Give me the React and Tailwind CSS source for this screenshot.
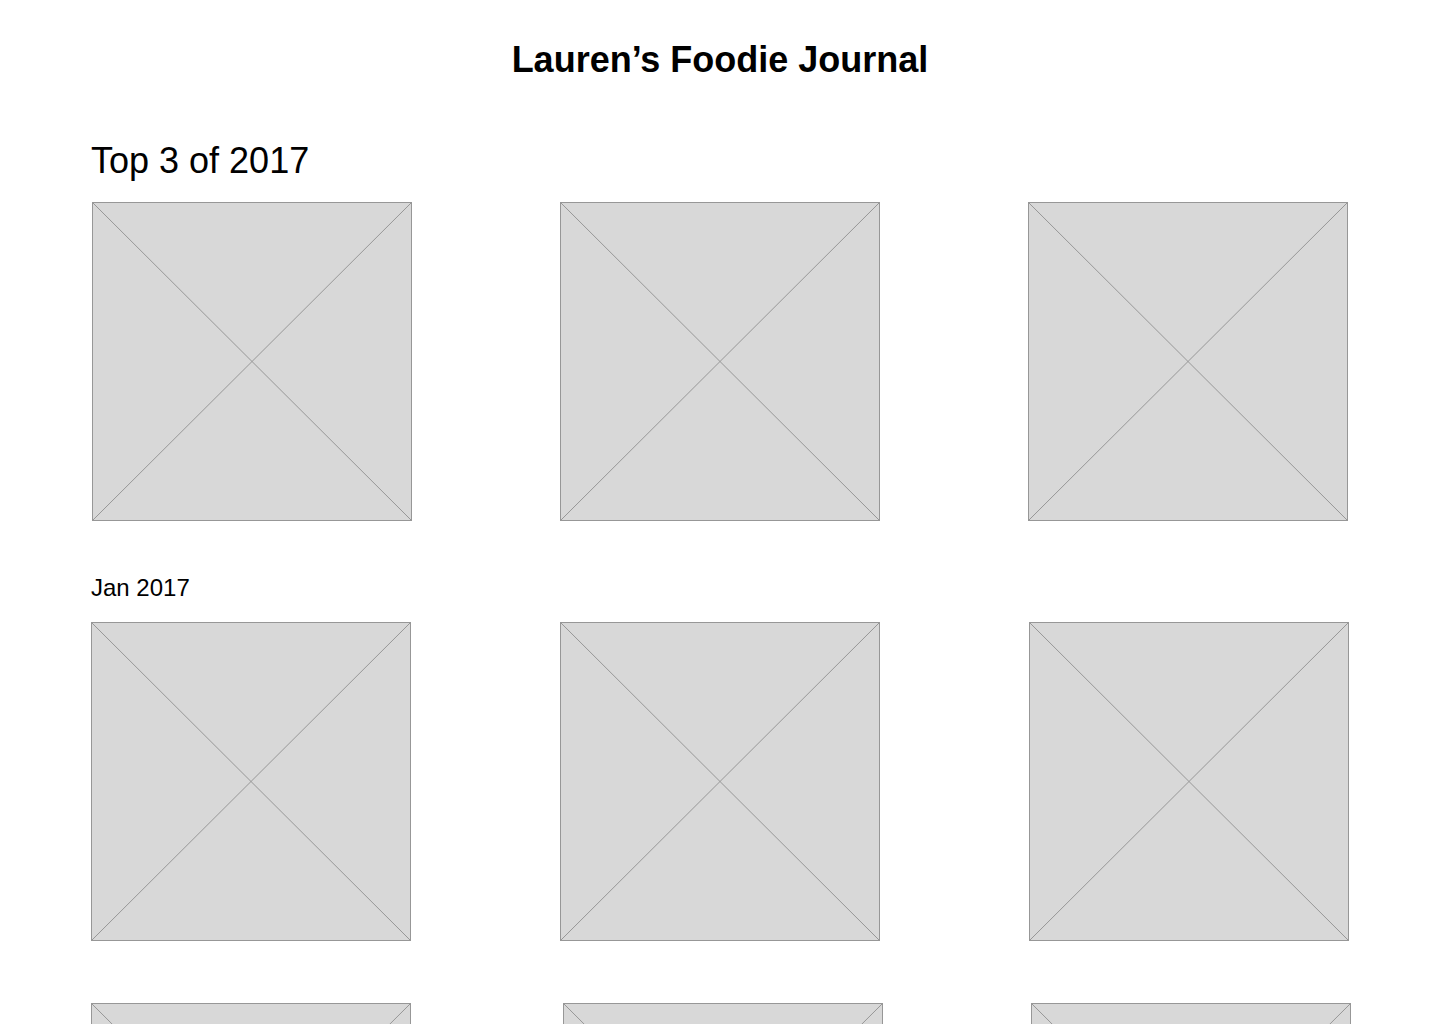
function Placeholder() {
  return (
    <div className="relative h-[319px] w-[320px] shrink-0 border border-[#979797] bg-[#d8d8d8]">
      <svg
        className="absolute inset-0 h-full w-full"
        viewBox="0 0 100 100"
        preserveAspectRatio="none"
      >
        <line x1="0" y1="0" x2="100" y2="100" stroke="#979797" strokeWidth="1" vectorEffect="non-scaling-stroke" />
        <line x1="100" y1="0" x2="0" y2="100" stroke="#979797" strokeWidth="1" vectorEffect="non-scaling-stroke" />
      </svg>
    </div>
  );
}

export default function App() {
  return (
    <div className="min-h-screen overflow-hidden bg-white pt-[42px] font-['Liberation_Sans',Arial,sans-serif] text-black">
      <h1 className="text-center text-[36px] font-bold leading-none">Lauren’s Foodie Journal</h1>

      <section className="mt-[65px]">
        <h2 className="pl-[91px] text-[36px] leading-none">Top 3 of 2017</h2>
        <div className="ml-[92px] mt-[23px] flex gap-[148px]">
          <Placeholder />
          <Placeholder />
          <Placeholder />
        </div>
      </section>

      <section className="mt-[55px]">
        <h3 className="pl-[91px] text-[24px] leading-none">Jan 2017</h3>
        <div className="ml-[91px] mt-[22px] flex gap-[149px]">
          <Placeholder />
          <Placeholder />
          <Placeholder />
        </div>
        <div className="ml-[91px] mt-[62px] flex">
          <Placeholder />
          <div className="ml-[152px]">
            <Placeholder />
          </div>
          <div className="ml-[148px]">
            <Placeholder />
          </div>
        </div>
      </section>
    </div>
  );
}
